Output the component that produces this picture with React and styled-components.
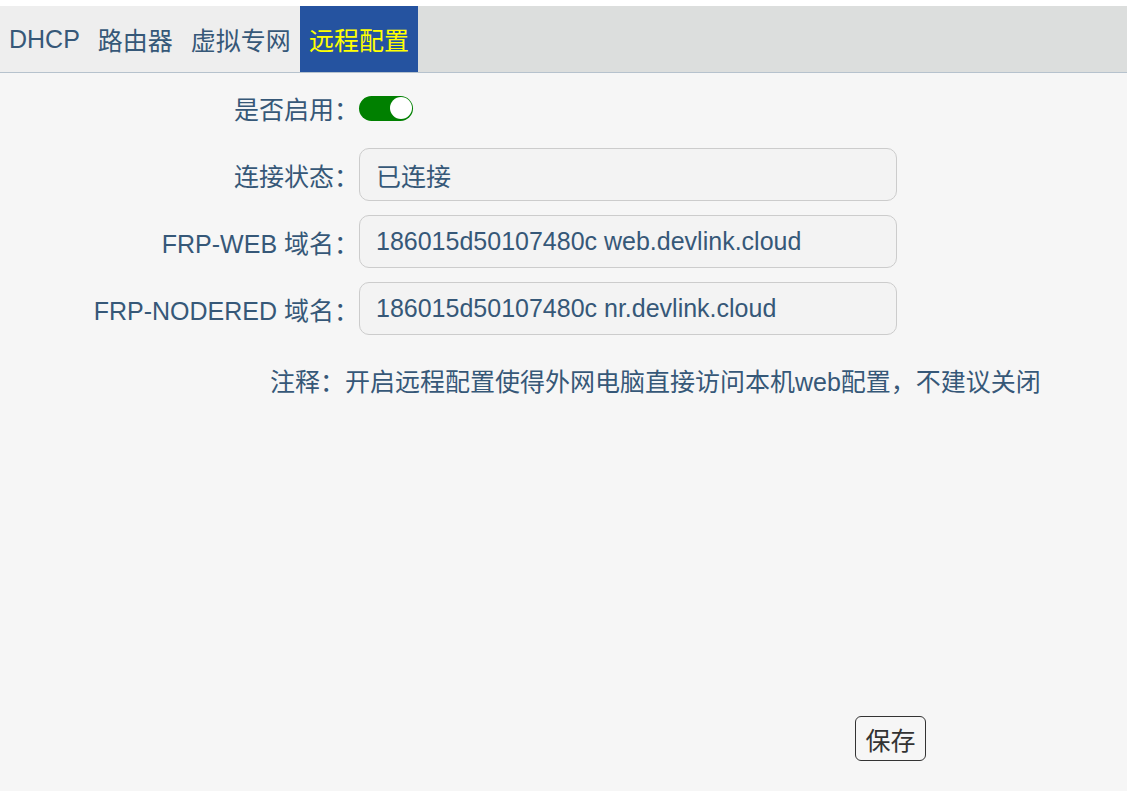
import React, { useState } from "react";
import styled, { createGlobalStyle } from "styled-components";

const Global = createGlobalStyle`
  html, body { margin: 0; padding: 0; background: #ffffff; }
  body { font-family: "Liberation Sans", "Noto Sans CJK SC", sans-serif; }
  * { box-sizing: border-box; }
`;

const Page = styled.div`
  margin-top: 6px;
  min-height: 785px;
  background: #f6f6f6;
  display: flex;
  flex-direction: column;
  font-family: "Liberation Sans", "Noto Sans CJK SC", sans-serif;
  font-size: 25px;
  color: #365878;
`;

const TabBar = styled.div`
  display: flex;
  height: 67px;
  background: #dcdedd;
  border-bottom: 1px solid #b6c2cd;
`;

const TabList = styled.div`
  display: flex;
  background: #eeeeee;
`;

const Tab = styled.div`
  display: flex;
  align-items: center;
  padding: 0 9px;
  height: 66px;
  background: ${(p) => (p.$active ? "#2553a0" : "transparent")};
  color: ${(p) => (p.$active ? "#ffff00" : "#365878")};
  cursor: pointer;
  white-space: nowrap;
`;

const Form = styled.div`
  display: flex;
  flex-direction: column;
  gap: 14px;
  padding-top: 8px;
`;

const Row = styled.div`
  display: grid;
  grid-template-columns: 359px 538px;
  align-items: center;
  height: 53px;
`;

const Label = styled.div`
  text-align: right;
  white-space: nowrap;
`;

const Field = styled.div`
  height: 53px;
  border: 1px solid #cccccc;
  border-radius: 10px;
  background: #f3f3f3;
  display: flex;
  align-items: center;
  padding-left: 16px;
  color: #365878;
`;

const SwitchCell = styled.div`
  display: flex;
  align-items: center;
  padding-top: 1px;
`;

const Switch = styled.button`
  display: block;
  width: 54px;
  height: 25px;
  border: none;
  padding: 0;
  border-radius: 13px;
  background: ${(p) => (p.$on ? "#008000" : "#bbbbbb")};
  position: relative;
  cursor: pointer;
`;

const Knob = styled.span`
  position: absolute;
  top: 1.5px;
  left: ${(p) => (p.$on ? "30.5px" : "1.5px")};
  width: 22px;
  height: 22px;
  border-radius: 50%;
  background: #ffffff;
`;

const Note = styled.div`
  margin-top: 32px;
  padding-left: 270px;
  line-height: 30px;
  white-space: nowrap;
`;

const Footer = styled.div`
  margin-top: auto;
  width: 926px;
  display: flex;
  justify-content: flex-end;
  padding-bottom: 30px;
`;

const SaveButton = styled.button`
  width: 71px;
  height: 45px;
  border: 1px solid #333333;
  border-radius: 6px;
  background: transparent;
  color: #333333;
  font-family: "Liberation Sans", "Noto Sans CJK SC", sans-serif;
  font-size: 25px;
  padding: 0;
  cursor: pointer;
`;

export default function App() {
  const [on, setOn] = useState(true);
  const tabs = ["DHCP", "路由器", "虚拟专网", "远程配置"];
  return (
    <>
      <Global />
      <Page>
        <TabBar>
          <TabList>
            {tabs.map((t, i) => (
              <Tab key={t} $active={i === 3}>
                {t}
              </Tab>
            ))}
          </TabList>
        </TabBar>
        <Form>
          <Row>
            <Label>是否启用：</Label>
            <SwitchCell>
              <Switch $on={on} onClick={() => setOn(!on)}>
                <Knob $on={on} />
              </Switch>
            </SwitchCell>
          </Row>
          <Row>
            <Label>连接状态：</Label>
            <Field>已连接</Field>
          </Row>
          <Row>
            <Label>FRP-WEB 域名：</Label>
            <Field>186015d50107480c web.devlink.cloud</Field>
          </Row>
          <Row>
            <Label>FRP-NODERED 域名：</Label>
            <Field>186015d50107480c nr.devlink.cloud</Field>
          </Row>
        </Form>
        <Note>注释：开启远程配置使得外网电脑直接访问本机web配置，不建议关闭</Note>
        <Footer>
          <SaveButton>保存</SaveButton>
        </Footer>
      </Page>
    </>
  );
}
